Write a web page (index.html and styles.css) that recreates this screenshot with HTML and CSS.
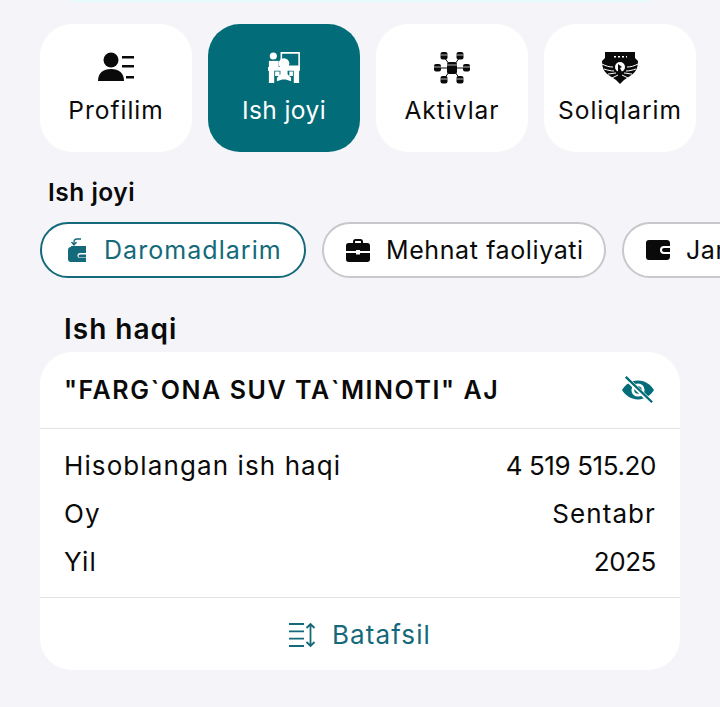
FILE: index.html
```html
<!DOCTYPE html>
<html lang="uz">
<head>
<meta charset="utf-8">
<title>Ish joyi</title>
<link rel="stylesheet" href="styles.css">
</head>
<body>
<div class="top-strip"></div>
<main class="page">
  <nav class="tabs">
    <div class="tab">
      <svg class="tab-icon" viewBox="0 0 36 32"><circle cx="13" cy="8" r="7.500"/><path d="M0 29c0-8 5-12 13-12s13 4 13 12z"/><path d="M24 4h12v2.500H24zM24 13h12v2.500H24zM28 24h8v2.500h-8z"/></svg>
      <span>Profilim</span>
    </div>
    <div class="tab tab-active">
      <svg class="tab-icon" viewBox="0 0 36 36"><circle cx="6" cy="4.500" r="4"/><path d="M1 10h11v8H1z"/><path d="M15 1h20v15H15z" fill="none" stroke="currentColor" stroke-width="1.800"/><circle cx="18" cy="13" r="6"/><path d="M0 17h36v4H0zM1 21h6v14H1zM29 21h6v14h-6zM8 22h5v5H8zM24 22h4v5h-4zM14 19h8v6l4 4v4l-6-2h-4l-6 2v-4l4-4z"/></svg>
      <span>Ish joyi</span>
    </div>
    <div class="tab">
      <svg class="tab-icon" viewBox="0 0 36 32"><path d="M10 5l8 11 8-11M10 27l8-11 8 11M5 16h26" fill="none" stroke="currentColor" stroke-width="1"/><rect x="6.500" y="0" width="7" height="7.500" rx="2"/><rect x="22.500" y="0" width="7" height="7.500" rx="2"/><rect x="0" y="12" width="7" height="7.500" rx="2"/><rect x="29" y="12" width="7" height="7.500" rx="2"/><rect x="6.500" y="24" width="7" height="7.500" rx="2"/><rect x="22.500" y="24" width="7" height="7.500" rx="2"/><rect x="13" y="10" width="10" height="12" rx="2.500"/><path d="M6.500 3h7M22.500 3h7M0 15h7M29 15h7M6.500 27h7M22.500 27h7M13 13h10" fill="none" stroke="#fff" stroke-width=".7"/></svg>
      <span>Aktivlar</span>
    </div>
    <div class="tab">
      <svg class="tab-icon" viewBox="0 0 36 32"><path d="M3 0h30v6l3 3c0 8-3 12-8 15l-6 4-4 4-4-4-6-4C3 21 0 17 0 9l3-3z"/><path d="M0 12c4 2 7 3 11 3M2 17c3 1 7 2 10 2M6 22c2 0 6-1 8-1M10 26c2-1 4-2 6-3M36 12c-4 2-7 3-11 3M34 17c-3 1-7 2-10 2M30 22c-2 0-6-1-8-1M26 26c-2-1-4-2-6-3" fill="none" stroke="#fff" stroke-width="1"/><circle cx="18" cy="15" r="5" fill="#fff"/><path d="M16 20v-8l4 3-2 1 2 4z"/><path d="M12 4h2v1.500h-2zM16 4h2v1.500h-2zM20 4h2v1.500h-2zM24 4h1v1.500h-1z" fill="#fff"/></svg>
      <span>Soliqlarim</span>
    </div>
  </nav>

  <h2 class="section-label">Ish joyi</h2>

  <div class="chips">
    <div class="chip chip-active">
      <svg class="chip-icon" viewBox="0 0 18 24"><path d="M13 1H9c-2 0-3 1-3 3v2M3.500 4L6 7l2.500-3" fill="none" stroke="currentColor" stroke-width="1.300"/><path d="M3 8h15v2H3z"/><path d="M0 12c0-2 1-3 3-3h15v3h-1.500v0H18v3h-6a2.500 2.500 0 0 0 0 5h6v4H3c-2 0-3-1-3-3z"/><path d="M12 16.500h6v3h-6a1.500 1.500 0 0 1 0-3z"/></svg>
      <span>Daromadlarim</span>
    </div>
    <div class="chip chip-work">
      <svg class="chip-icon" viewBox="0 0 24 24"><path d="M7 6V3.500C7 2 8 1 9.500 1h5C16 1 17 2 17 3.500V6h-2V3.500c0-.3-.2-.5-.5-.5h-5c-.3 0-.5.2-.5.5V6z"/><path d="M2.500 5h19C23 5 24 6 24 7.500V13H14v-1h-4v1H0V7.500C0 6 1 5 2.500 5zM0 15h10v1.500h4V15h10v6.500c0 1.500-1 2.500-2.500 2.500h-19C1 24 0 23 0 21.500z"/></svg>
      <span>Mehnat faoliyati</span>
    </div>
    <div class="chip">
      <svg class="chip-icon chip-icon-wide" viewBox="0 0 24 20"><path fill-rule="evenodd" d="M3 0h18c1.500 0 3 1 3 3v3h-6a4 4 0 0 0 0 8h6v3c0 2-1.500 3-3 3H3c-2 0-3-1-3-3V3c0-2 1-3 3-3zM18 8h6v4h-6a2 2 0 0 1 0-4z"/><circle cx="18.500" cy="10" r="1"/></svg>
      <span>Jamg'armalarim</span>
    </div>
  </div>

  <h2 class="card-title">Ish haqi</h2>

  <section class="card">
    <header class="card-head">
      <span class="org">"FARG`ONA SUV TA`MINOTI" AJ</span>
      <svg class="eye" viewBox="0 0 34 30"><path fill-rule="evenodd" d="M17 5c8 0 14 5 17 10-3 5-9 10-17 10S3 20 0 15C3 10 9 5 17 5zm0 3a7 7 0 1 0 0 14 7 7 0 0 0 0-14z"/><circle cx="17" cy="15" r="4"/><path d="M3 1l28 27" fill="none" stroke="#fff" stroke-width="5"/><path d="M4 1l28 27" fill="none" stroke="currentColor" stroke-width="2.500"/></svg>
    </header>
    <div class="rows">
      <div class="row"><span>Hisoblangan ish haqi</span><span class="num">4 519 515.20</span></div>
      <div class="row"><span>Oy</span><span>Sentabr</span></div>
      <div class="row"><span>Yil</span><span class="num">2025</span></div>
    </div>
    <footer class="card-foot">
      <svg class="sort" viewBox="0 0 28 26"><path d="M0 2h15M0 9.300h15M0 16.600h15M0 24h15M21.500 2v22M17.500 6l4-4 4 4M17.500 20l4 4 4-4" fill="none" stroke="currentColor" stroke-width="1.800"/></svg>
      <span>Batafsil</span>
    </footer>
  </section>
</main>
</body>
</html>
```

FILE: styles.css
```css
* { box-sizing: border-box; }

html, body {
  margin: 0;
  padding: 0;
  height: 707px;
  overflow: hidden;
  background: #f4f4f9;
  font-family: "Inter", "Liberation Sans", sans-serif;
  color: #0a0a0a;
  white-space: nowrap;
}

.top-strip {
  position: absolute;
  top: 0;
  left: 72px;
  width: 576px;
  height: 2px;
  background: #e6fbfb;
}

.page {
  padding: 24px 0 0 40px;
  width: 720px;
  overflow: hidden;
}

.tabs {
  display: flex;
  gap: 16px;
}

.tab {
  width: 152px;
  height: 128px;
  flex: none;
  border-radius: 32px;
  background: #fff;
  display: flex;
  flex-direction: column;
  align-items: center;
  padding-top: 28px;
  font-size: 24.500px;
  letter-spacing: 1px;
  line-height: 32px;
}

.tab-icon {
  width: 36px;
  height: 32px;
  margin-bottom: 10px;
  fill: currentColor;
  flex: none;
}

.tab-active {
  background: #026c78;
  color: #fff;
  letter-spacing: 0.4px;
}

.section-label {
  margin: 24px 0 14px 8px;
  height: 32px;
  font-size: 24.500px;
  letter-spacing: 0.5px;
  line-height: 32px;
  font-weight: 600;
}

.chips {
  display: flex;
  gap: 16px;
  width: 900px;
}

.chip {
  height: 56px;
  flex: none;
  border: 2px solid #c8c8cc;
  border-radius: 28px;
  background: #fff;
  display: flex;
  align-items: center;
  gap: 16px;
  padding: 0 22px;
  font-size: 25px;
  letter-spacing: 0.6px;
}

.chip-active {
  border-color: #14697a;
  color: #14697a;
  width: 266px;
  padding-left: 26px;
  gap: 18px;
  letter-spacing: 1.050px;
}

.chip-work { width: 284px; }

.chip-icon {
  width: 24px;
  height: 24px;
  fill: currentColor;
  flex: none;
}

.chip-active .chip-icon { width: 18px; }

.chip-icon-wide { height: 20px; }

.card-title {
  margin: 35px 0 7px 24px;
  height: 32px;
  font-size: 28px;
  letter-spacing: 1px;
  line-height: 32px;
  font-weight: 600;
}

.card {
  width: 640px;
  height: 318px;
  border-radius: 32px;
  background: #fff;
  display: flex;
  flex-direction: column;
}

.card-head {
  height: 77px;
  flex: none;
  display: flex;
  align-items: center;
  justify-content: space-between;
  padding: 0 26px 0 24px;
  border-bottom: 1px solid #e3e3e6;
}

.org {
  font-size: 25px;
  letter-spacing: 1.550px;
  font-weight: 600;
}

.eye {
  width: 32px;
  height: 30px;
  fill: #026c78;
  color: #026c78;
  flex: none;
}

.rows {
  height: 169px;
  flex: none;
  padding: 12px 24px 0;
  border-bottom: 1px solid #e3e3e6;
}

.row {
  height: 48px;
  display: flex;
  align-items: center;
  justify-content: space-between;
  font-size: 26px;
  letter-spacing: 1.100px;
}

.row .num { letter-spacing: -0.400px; }

.card-foot {
  flex: 1;
  display: flex;
  align-items: center;
  justify-content: center;
  gap: 15px;
  color: #14697a;
  font-size: 26px;
  letter-spacing: 1.100px;
  padding-top: 1px;
}

.sort {
  width: 28px;
  height: 26px;
  flex: none;
}
```
